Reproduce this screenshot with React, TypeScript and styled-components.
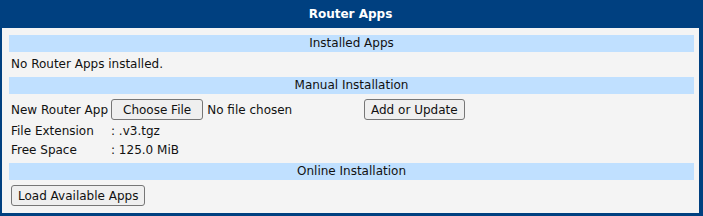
import * as React from 'react'
import styled, { createGlobalStyle } from 'styled-components'

const GlobalStyle = createGlobalStyle`
  html, body {
    margin: 0;
    padding: 0;
    background: #ffffff;
  }
  body {
    font-family: "DejaVu Sans", Verdana, sans-serif;
    font-size: 12px;
    color: #111111;
  }
`

const Frame = styled.div`
  width: 703px;
  height: 216px;
  box-sizing: border-box;
  background: #004080;
  padding: 0 4px 3px 2px;
  display: flex;
  flex-direction: column;
`

const Title = styled.div`
  height: 28px;
  line-height: 28px;
  text-align: center;
  color: #ffffff;
  font-weight: bold;
  font-size: 12px;
`

const Panel = styled.div`
  flex: 1;
  background: #f4f4f4;
  padding: 7px 5px 0 7px;
`

const SectionBar = styled.div<{ gap?: number }>`
  height: 17px;
  line-height: 17px;
  background: #c0e0ff;
  text-align: center;
  margin-top: ${props => props.gap ?? 0}px;
`

const TextRow = styled.div`
  height: 25px;
  line-height: 25px;
  padding-left: 2px;
`

const ControlRow = styled.div<{ top: number; bottom: number }>`
  display: flex;
  align-items: center;
  padding: ${props => props.top}px 2px ${props => props.bottom}px;
`

const InfoRow = styled.div`
  display: flex;
  height: 19px;
  line-height: 19px;
  padding-left: 2px;
`

const Label = styled.div`
  width: 100px;
  flex-shrink: 0;
  white-space: nowrap;
`

const FilePicker = styled.div`
  width: 253px;
  display: flex;
  align-items: center;
  gap: 4px;
`

const Button = styled.button<{ pad?: number }>`
  height: 21px;
  box-sizing: border-box;
  padding: 0 ${props => props.pad ?? 6}px;
  font-family: "DejaVu Sans", Verdana, sans-serif;
  font-size: 12px;
  color: #111111;
  background: #efefef;
  border: 1px solid #767676;
  border-radius: 3px;
`

export default function App() {
  return (
    <>
      <GlobalStyle />
      <Frame>
        <Title>Router Apps</Title>
        <Panel>
          <SectionBar>Installed Apps</SectionBar>
          <TextRow>No Router Apps installed.</TextRow>
          <SectionBar>Manual Installation</SectionBar>
          <ControlRow top={5} bottom={2}>
            <Label>New Router App</Label>
            <FilePicker>
              <Button pad={11}>Choose File</Button>
              <span>No file chosen</span>
            </FilePicker>
            <Button>Add or Update</Button>
          </ControlRow>
          <InfoRow>
            <Label>File Extension</Label>
            <span>: .v3.tgz</span>
          </InfoRow>
          <InfoRow>
            <Label>Free Space</Label>
            <span>: 125.0 MiB</span>
          </InfoRow>
          <SectionBar gap={3}>Online Installation</SectionBar>
          <ControlRow top={5} bottom={0}>
            <Button>Load Available Apps</Button>
          </ControlRow>
        </Panel>
      </Frame>
    </>
  )
}
